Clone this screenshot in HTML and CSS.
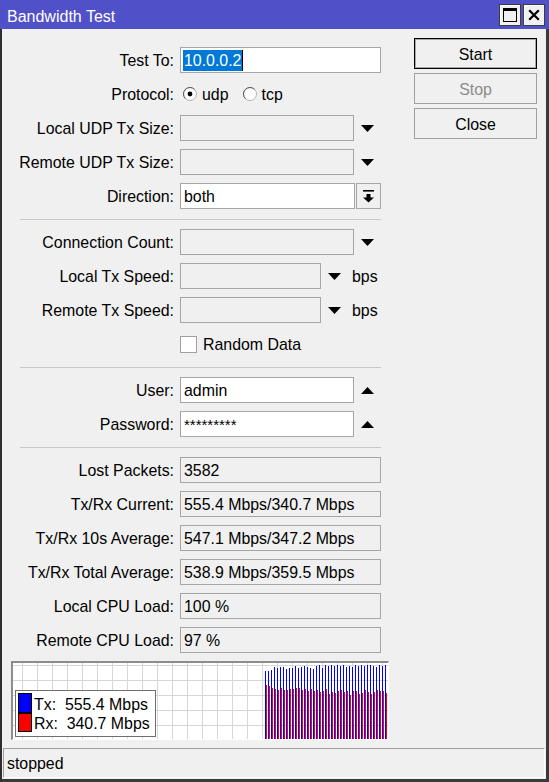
FILE: index.html
```html
<!DOCTYPE html>
<html>
<head>
<meta charset="utf-8">
<title>Bandwidth Test</title>
<link rel="stylesheet" href="styles.css">
</head>
<body>
<div class="window">
  <div class="titlebar">
    <span class="title">Bandwidth Test</span>
    <div class="tb-btns">
      <div class="tb-btn"><svg width="14" height="14" viewBox="0 0 14 14"><rect x="0.5" y="0.5" width="13" height="13" fill="none" stroke="#000"/><rect x="0" y="0" width="14" height="3" fill="#000"/></svg></div>
      <div class="tb-btn"><svg width="12" height="12" viewBox="0 0 12 12"><path d="M1.2 1.2L10.8 10.8M10.8 1.2L1.2 10.8" stroke="#000" stroke-width="2.2"/></svg></div>
    </div>
  </div>
  <div class="frame">
    <div class="main">
      <div class="form">
        <div class="row"><label>Test To:</label><div class="ctl"><div class="field white w201 sel-field"><span class="sel">10.0.0.2</span></div></div></div>
        <div class="row"><label>Protocol:</label><div class="ctl">
          <svg class="radio" width="14" height="14" viewBox="0 0 14 14"><circle cx="7" cy="7" r="6.5" fill="#fff" stroke="#b4b4b4"/><path d="M2.4 11.6A6.5 6.5 0 0 1 11.6 2.4" fill="none" stroke="#5a5a5a"/><circle cx="7" cy="7" r="2.4" fill="#000"/></svg>
          <span class="rlabel">udp</span>
          <svg class="radio r2" width="14" height="14" viewBox="0 0 14 14"><circle cx="7" cy="7" r="6.5" fill="#fff" stroke="#b4b4b4"/><path d="M2.4 11.6A6.5 6.5 0 0 1 11.6 2.4" fill="none" stroke="#5a5a5a"/></svg>
          <span class="rlabel">tcp</span>
        </div></div>
        <div class="row"><label>Local UDP Tx Size:</label><div class="ctl"><div class="field w174"></div><svg class="arrow" width="13" height="7" viewBox="0 0 13 7"><path d="M0 0H13L6.5 7Z"/></svg></div></div>
        <div class="row"><label>Remote UDP Tx Size:</label><div class="ctl"><div class="field w174"></div><svg class="arrow" width="13" height="7" viewBox="0 0 13 7"><path d="M0 0H13L6.5 7Z"/></svg></div></div>
        <div class="row"><label>Direction:</label><div class="ctl"><div class="field white w175">both</div><div class="dd-btn"><svg width="11" height="13" viewBox="0 0 11 13"><rect x="0" y="0" width="11" height="1.6"/><path d="M3.5 4H7.5V7.5H11L5.5 12.5L0 7.5H3.5Z"/></svg></div></div></div>
        <div class="sep"></div>
        <div class="row"><label>Connection Count:</label><div class="ctl"><div class="field w174"></div><svg class="arrow" width="13" height="7" viewBox="0 0 13 7"><path d="M0 0H13L6.5 7Z"/></svg></div></div>
        <div class="row"><label>Local Tx Speed:</label><div class="ctl"><div class="field w141"></div><svg class="arrow" width="13" height="7" viewBox="0 0 13 7"><path d="M0 0H13L6.5 7Z"/></svg><span class="unit">bps</span></div></div>
        <div class="row"><label>Remote Tx Speed:</label><div class="ctl"><div class="field w141"></div><svg class="arrow" width="13" height="7" viewBox="0 0 13 7"><path d="M0 0H13L6.5 7Z"/></svg><span class="unit">bps</span></div></div>
        <div class="row"><label></label><div class="ctl"><div class="checkbox"></div><span class="clabel">Random Data</span></div></div>
        <div class="sep"></div>
        <div class="row"><label>User:</label><div class="ctl"><div class="field white w174">admin</div><svg class="arrow" width="13" height="7" viewBox="0 0 13 7"><path d="M0 7H13L6.5 0Z"/></svg></div></div>
        <div class="row"><label>Password:</label><div class="ctl"><div class="field white w174 pw">*********</div><svg class="arrow" width="13" height="7" viewBox="0 0 13 7"><path d="M0 7H13L6.5 0Z"/></svg></div></div>
        <div class="sep"></div>
        <div class="row"><label>Lost Packets:</label><div class="ctl"><div class="field w201">3582</div></div></div>
        <div class="row"><label>Tx/Rx Current:</label><div class="ctl"><div class="field w201">555.4 Mbps/340.7 Mbps</div></div></div>
        <div class="row"><label>Tx/Rx 10s Average:</label><div class="ctl"><div class="field w201">547.1 Mbps/347.2 Mbps</div></div></div>
        <div class="row"><label>Tx/Rx Total Average:</label><div class="ctl"><div class="field w201">538.9 Mbps/359.5 Mbps</div></div></div>
        <div class="row"><label>Local CPU Load:</label><div class="ctl"><div class="field w201">100 %</div></div></div>
        <div class="row"><label>Remote CPU Load:</label><div class="ctl"><div class="field w201">97 %</div></div></div>
      </div>
      <div class="actions">
        <div class="btn default">Start</div>
        <div class="btn disabled">Stop</div>
        <div class="btn">Close</div>
      </div>
    </div>
    <div class="graph">
      <svg class="chart" width="375" height="76" viewBox="0 0 375 76" shape-rendering="crispEdges">
        <defs>
          <pattern id="grid" x="9" y="2" width="15" height="15" patternUnits="userSpaceOnUse">
            <path d="M0.5 0V15M0 0.5H15" stroke="#d6d6d6" stroke-width="1" fill="none"/>
          </pattern>
        </defs>
        <rect x="0" y="0" width="375" height="76" fill="url(#grid)"/>
        <path stroke="#0000ff" stroke-width="1" fill="none" d="M252.5 76V8M255.5 76V8M258.5 76V7M261.5 76V4M264.5 76V5M267.5 76V4M270.5 76V4M273.5 76V6M276.5 76V5M279.5 76V5M282.5 76V3M285.5 76V5M288.5 76V4M291.5 76V3M294.5 76V4M297.5 76V5M300.5 76V6M303.5 76V3M306.5 76V2M309.5 76V5M312.5 76V2M315.5 76V3M318.5 76V2M321.5 76V3M324.5 76V2M327.5 76V3M330.5 76V2M333.5 76V4M336.5 76V3M339.5 76V4M342.5 76V2M345.5 76V3M348.5 76V2M351.5 76V3M354.5 76V2M357.5 76V2M360.5 76V3M363.5 76V4M366.5 76V2M369.5 76V3M372.5 76V2"/>
        <path stroke="#ff0000" stroke-width="1" fill="none" d="M253.5 76V22M256.5 76V23M259.5 76V25M262.5 76V26M265.5 76V27M268.5 76V25M271.5 76V27M274.5 76V27M277.5 76V26M280.5 76V26M283.5 76V25M286.5 76V25M289.5 76V27M292.5 76V26M295.5 76V28M298.5 76V26M301.5 76V28M304.5 76V27M307.5 76V29M310.5 76V28M313.5 76V26M316.5 76V31M319.5 76V29M322.5 76V30M325.5 76V28M328.5 76V27M331.5 76V29M334.5 76V28M337.5 76V32M340.5 76V28M343.5 76V28M346.5 76V31M349.5 76V30M352.5 76V27M355.5 76V29M358.5 76V31M361.5 76V29M364.5 76V27M367.5 76V28M370.5 76V28M373.5 76V30"/>
      </svg>
      <div class="legend">
        <div class="lrow"><span class="swatch tx"></span><span class="ltext">Tx:  555.4 Mbps</span></div>
        <div class="lrow"><span class="swatch rx"></span><span class="ltext">Rx:  340.7 Mbps</span></div>
      </div>
    </div>
    <div class="status">stopped</div>
  </div>
</div>
</body>
</html>
```
FILE: styles.css
```css
* { box-sizing: border-box; margin: 0; padding: 0; }
html, body { width: 549px; height: 782px; overflow: hidden; }
body {
  font-family: "Liberation Sans", Arial, sans-serif;
  font-size: 15.9px;
  color: #000;
  background: #f0f0f0;
}
.window { width: 549px; height: 782px; display: flex; flex-direction: column; }

.titlebar {
  height: 29px;
  flex: none;
  background: #5050c8;
  color: #fff;
  display: flex;
  align-items: center;
  justify-content: space-between;
  padding: 0 4px 0 7px;
}
.title { line-height: 25px; padding-top: 4px; font-size: 16px; }
.tb-btns { display: flex; gap: 2px; }
.tb-btn {
  width: 22px; height: 22px;
  background: #f0f0f0;
  border: 1px solid #3c3c3c;
  box-shadow: inset 1px 1px #ffffff;
  display: flex; align-items: center; justify-content: center;
}

.frame {
  flex: 1;
  border-left: 2px solid #2e2e2e;
  border-right: 3px solid #3a3a3a;
  border-bottom: 3px solid #3a3a3a;
  padding-bottom: 1px;
  display: flex;
  flex-direction: column;
}
.main { display: flex; }
.form {
  width: 388px;
  padding-top: 18px;
  display: flex;
  flex-direction: column;
  gap: 8px;
}
.row {
  display: grid;
  grid-template-columns: 172px 1fr;
  column-gap: 6px;
  height: 26px;
  align-items: center;
}
.row label { text-align: right; white-space: nowrap; padding-top: 2px; }
.ctl { display: flex; align-items: center; height: 26px; }

.field {
  height: 26px;
  border: 1px solid #a5a5a5;
  background: #f0f0f0;
  padding: 2px 0 0 3px;
  line-height: 22px;
  white-space: nowrap;
  overflow: hidden;
}
.white { background: #fff; }
.w201 { width: 201px; }
.w175 { width: 175px; }
.w174 { width: 174px; }
.w141 { width: 141px; }
.sel-field { padding: 0 0 0 2px; display: flex; align-items: center; }
.sel {
  background: #0078d7;
  color: #fff;
  padding: 1px 1px 0 1px;
  line-height: 20px;
  border-right: 1px solid #000;
}
.pw { font-size: 15px; }

.arrow { margin-left: 7px; flex: none; }
.arrow path { fill: #000; }
.unit { margin-left: 11px; padding-top: 2px; }

.dd-btn {
  width: 25px; height: 26px;
  margin-left: 1px;
  border: 1px solid #a5a5a5;
  background: #f0f0f0;
  display: flex; align-items: center; justify-content: center;
}
.dd-btn svg { fill: #000; }

.radio { margin-left: 3px; flex: none; }
.radio.r2 { margin-left: 14px; }
.rlabel { margin-left: 5px; padding-top: 2px; }

.checkbox {
  width: 17px; height: 17px;
  border: 1px solid #a0a0a0;
  background: #fff;
  flex: none;
}
.clabel { margin-left: 6px; padding-top: 2px; }

.sep {
  height: 1px;
  width: 361px;
  margin: 2px 0 1px 18px;
  background: #c8c8c8;
}

.actions {
  margin-left: 24px;
  padding-top: 9px;
  display: flex;
  flex-direction: column;
  gap: 4px;
}
.btn {
  width: 123px; height: 31px;
  border: 1px solid #a0a0a0;
  background: #f0f0f0;
  display: flex; align-items: center; justify-content: center;
  padding-top: 2px;
}
.btn.default { border-color: #000; box-shadow: inset 0 0 0 1px rgba(0,0,0,0.3); }
.btn.disabled { color: #8c8c8c; }

.graph {
  position: relative;
  margin: 8px 0 0 9px;
  width: 378px;
  height: 79px;
  background: #fff;
  border-top: 2px solid #8c8c8c;
  border-left: 2px solid #8c8c8c;
  border-right: 1px solid #fff;
  border-bottom: 1px solid #fff;
}
.chart { display: block; }
.legend {
  position: absolute;
  left: 2px; top: 27px;
  width: 141px; height: 47px;
  border: 1px solid #6e6e6e;
  background: #fff;
  padding: 2px 2px 0 2px;
}
.lrow { display: flex; align-items: center; height: 20px; }
.lrow + .lrow { height: 19px; }
.swatch {
  width: 14px; height: 100%;
  border: 1px solid #000;
  flex: none;
}
.swatch.tx { background: #0000ff; }
.swatch.rx { background: #ff0000; }
.ltext { margin-left: 2px; white-space: pre; line-height: 19px; padding-top: 2px; }

.status {
  margin: 8px 1px 0 1px;
  height: 30px;
  border-top: 1px solid #a0a0a0;
  border-left: 1px solid #a0a0a0;
  border-right: 1px solid #fff;
  border-bottom: 1px solid #fff;
  padding: 2px 0 0 3px;
  line-height: 26px;
}
```
